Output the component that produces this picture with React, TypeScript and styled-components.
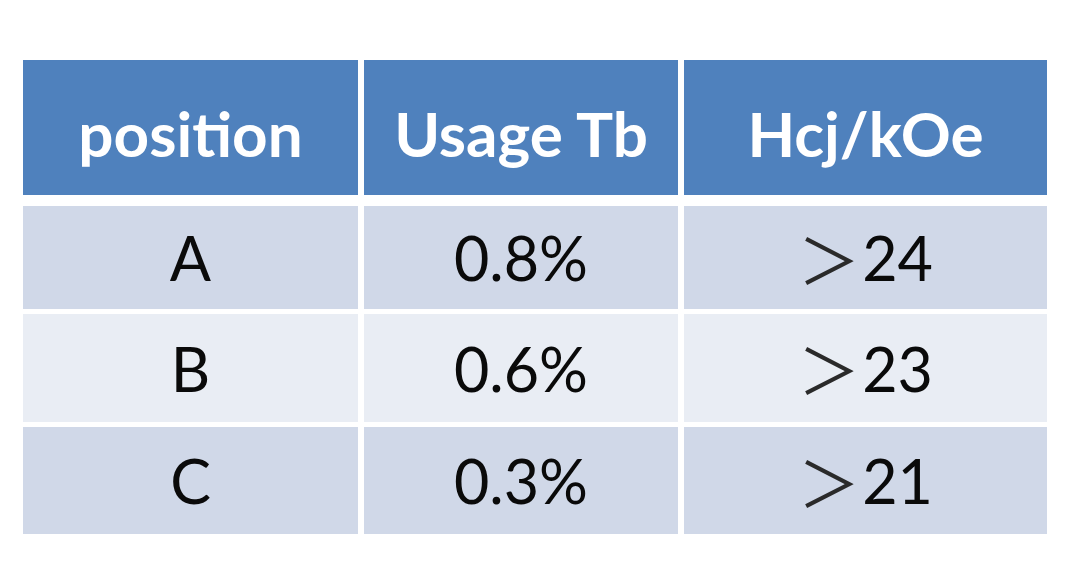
import React from 'react';
import styled, { createGlobalStyle } from 'styled-components';

const GlobalStyle = createGlobalStyle`
  html, body {
    margin: 0;
    padding: 0;
    background: #ffffff;
  }
  body {
    font-family: Lato, "Liberation Sans", sans-serif;
  }
`;

const Page = styled.div`
  width: 1068px;
  height: 580px;
  padding: 60px 0 0 23px;
  box-sizing: border-box;
`;

const Table = styled.div`
  display: flex;
  flex-direction: column;
  gap: 5px;
  width: 1024px;
`;

const Row = styled.div<{ $height: number; $header?: boolean }>`
  display: grid;
  grid-template-columns: 335px 314px 363px;
  column-gap: 6px;
  height: ${p => p.$height}px;
  margin-bottom: ${p => (p.$header ? 6 : 0)}px;
`;

const HeadCell = styled.div`
  display: flex;
  align-items: center;
  justify-content: center;
  background: #4f81bd;
  color: #ffffff;
  font-weight: 700;
  font-size: 62px;
  padding-top: 10px;
  box-sizing: border-box;
`;

const Cell = styled.div<{ $shade: 'dark' | 'light' }>`
  display: flex;
  align-items: center;
  justify-content: center;
  background: ${p => (p.$shade === 'dark' ? '#d0d8e8' : '#e9edf4')};
  color: #0a0a0a;
  font-size: 61px;
  font-weight: 400;
`;

// the fullwidth "greater than" sign, as in the source table
const Gt = styled.span`
  font-family: "Noto Sans CJK SC", sans-serif;
  font-weight: 400;
  font-size: 62px;
  color: #2a2a2a;
  margin-right: 2px;
`;

const rows = [
  { pos: 'A', usage: '0.8%', hcj: '24', height: 103, shade: 'dark' as const },
  { pos: 'B', usage: '0.6%', hcj: '23', height: 108, shade: 'light' as const },
  { pos: 'C', usage: '0.3%', hcj: '21', height: 107, shade: 'dark' as const },
];

export default function App() {
  return (
    <>
      <GlobalStyle />
      <Page>
        <Table>
          <Row $height={135} $header>
            <HeadCell>position</HeadCell>
            <HeadCell>Usage Tb</HeadCell>
            <HeadCell>Hcj/kOe</HeadCell>
          </Row>
          {rows.map(r => (
            <Row key={r.pos} $height={r.height}>
              <Cell $shade={r.shade}>{r.pos}</Cell>
              <Cell $shade={r.shade}>{r.usage}</Cell>
              <Cell $shade={r.shade}>
                <Gt>＞</Gt>
                {r.hcj}
              </Cell>
            </Row>
          ))}
        </Table>
      </Page>
    </>
  );
}
